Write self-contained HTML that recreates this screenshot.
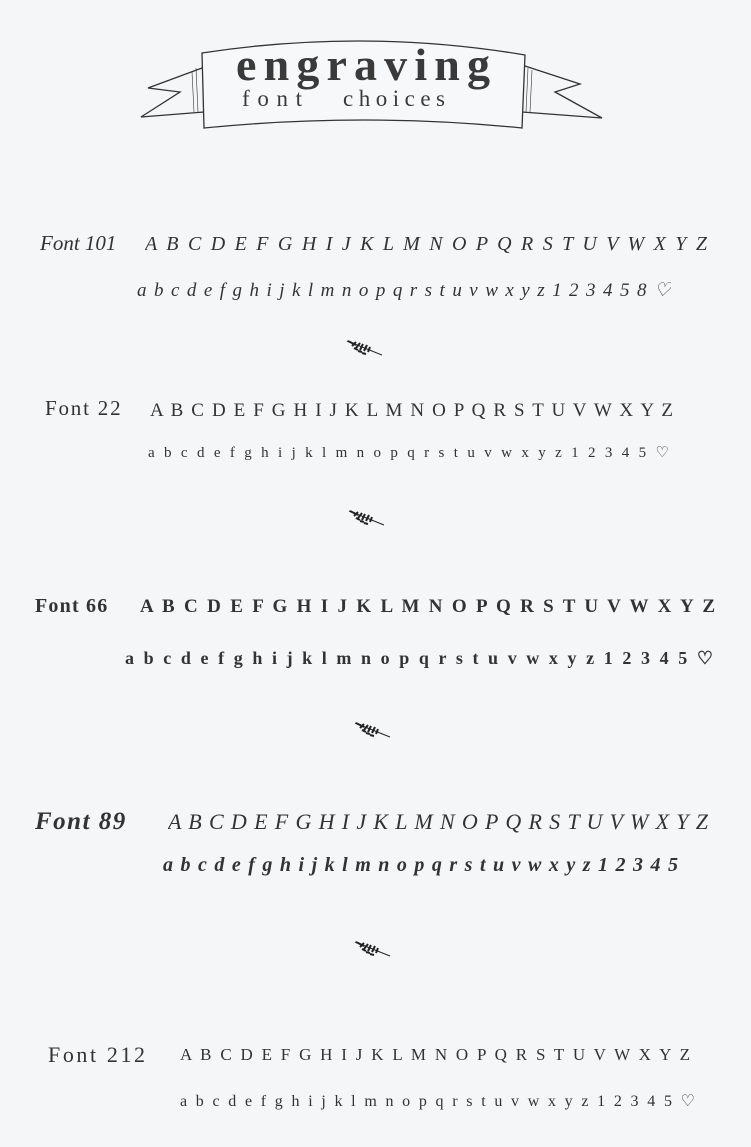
<!DOCTYPE html>
<html><head><meta charset="utf-8"><style>
body{margin:0;width:751px;height:1147px;background:#f4f6f8;position:relative;overflow:hidden;color:#333;font-family:"Liberation Serif",serif}
.t{position:absolute;white-space:nowrap;line-height:1}
.j{position:absolute;line-height:1;text-align:justify;text-align-last:justify;white-space:normal;overflow:hidden;height:30px}
.it{font-style:italic}
.b{font-weight:bold}
svg{position:absolute}
</style></head><body>
<svg width="751" height="160" style="left:0;top:0" viewBox="0 0 751 160" fill="none" stroke="#333" stroke-width="1.3">
<path d="M202 53 Q365 28 525 55 L522 128 Q365 112 204 128 Z" fill="#f7f8f9"/>
<path d="M202 68 L148 88 L180 92 L141 117 L204 112"/>
<path d="M525 66 L580 84 L555 92 L602 118 L522 112"/>
<path d="M196 68 L198 112 M192 72 L194 112 M528 68 L526 112 M532 70 L530 112" stroke-width="0.6"/>
<text x="236" y="80" font-family="Liberation Serif" font-size="46" font-weight="bold" fill="#3a3a3a" stroke="none" textLength="254" lengthAdjust="spacing">engraving</text>
<text x="242" y="106" font-family="Liberation Serif" font-size="23" fill="#3a3a3a" stroke="none" textLength="60" lengthAdjust="spacing">font</text>
<text x="343" y="106" font-family="Liberation Serif" font-size="23" fill="#3a3a3a" stroke="none" textLength="102" lengthAdjust="spacing">choices</text>
</svg>

<div class="t it" style="left:40px;top:233px;font-size:21px">Font 101</div>
<div class="j it" style="left:145px;width:562px;top:234px;font-size:20px">A B C D E F G H I J K L M N O P Q R S T U V W X Y Z</div>
<div class="j it" style="left:137px;width:534px;top:281px;font-size:19px">a b c d e f g h i j k l m n o p q r s t u v w x y z 1 2 3 4 5 8 ♡</div>

<div class="t" style="left:45px;top:398px;font-size:21px;letter-spacing:1.8px">Font 22</div>
<div class="j" style="left:150px;width:523px;top:401px;font-size:19px">A B C D E F G H I J K L M N O P Q R S T U V W X Y Z</div>
<div class="j" style="left:148px;width:521px;top:446px;font-size:15px">a b c d e f g h i j k l m n o p q r s t u v w x y z 1 2 3 4 5 ♡</div>

<div class="t b" style="left:35px;top:596px;font-size:20px;letter-spacing:1.2px">Font 66</div>
<div class="j b" style="left:140px;width:575px;top:597px;font-size:19px">A B C D E F G H I J K L M N O P Q R S T U V W X Y Z</div>
<div class="j b" style="left:125px;width:588px;top:649px;font-size:18px">a b c d e f g h i j k l m n o p q r s t u v w x y z 1 2 3 4 5 ♡</div>

<div class="t b it" style="left:35px;top:809px;font-size:25px;letter-spacing:1.5px">Font 89</div>
<div class="j it" style="left:168px;width:540px;top:811px;font-size:22px">A B C D E F G H I J K L M N O P Q R S T U V W X Y Z</div>
<div class="j b it" style="left:163px;width:515px;top:855px;font-size:20px">a b c d e f g h i j k l m n o p q r s t u v w x y z 1 2 3 4 5</div>

<div class="t" style="left:48px;top:1044px;font-size:22px;letter-spacing:2.6px">Font 212</div>
<div class="j" style="left:180px;width:510px;top:1046px;font-size:17px">A B C D E F G H I J K L M N O P Q R S T U V W X Y Z</div>
<div class="j" style="left:180px;width:515px;top:1094px;font-size:16px">a b c d e f g h i j k l m n o p q r s t u v w x y z 1 2 3 4 5 ♡</div>

<svg width="751" height="1147" style="left:0;top:0" stroke="#222" fill="none">
<g id="s" stroke-width="2">
<path d="M347 341 L382 355" stroke-width="1"/>
<path d="M348 341 L356 345 M352 346 L356 342 M356 348 L360 343 M360 350 L363 344 M364 351 L367 345 M368 352 L370 347 M354 348 L358 350 M358 351 L362 352 M362 353 L366 354"/>
</g>
<use href="#s" x="2" y="170"/>
<use href="#s" x="8" y="382"/>
<use href="#s" x="8" y="601"/>
</svg>
</body></html>
